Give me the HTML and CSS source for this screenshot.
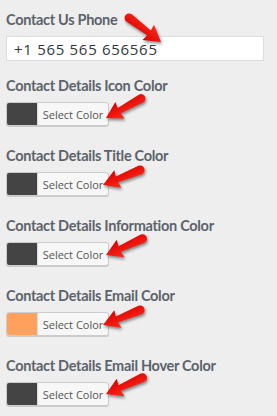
FILE: index.html
```html
<!DOCTYPE html>
<html>
<head>
    <title>Contact Settings</title>
    <link rel="stylesheet" href="styles.css">
</head>
<body>
    <div class="settings">
        <div class="field field-phone">
            <label class="field-label">Contact Us Phone</label>
            <input class="text-input" type="text" value="+1 565 565 656565">
        </div>
        <div class="field">
            <label class="field-label">Contact Details Icon Color</label>
            <button class="color-btn"><span class="swatch dark"></span><span class="btn-text">Select Color</span></button>
        </div>
        <div class="field">
            <label class="field-label">Contact Details Title Color</label>
            <button class="color-btn"><span class="swatch dark"></span><span class="btn-text">Select Color</span></button>
        </div>
        <div class="field">
            <label class="field-label">Contact Details Information Color</label>
            <button class="color-btn"><span class="swatch dark"></span><span class="btn-text">Select Color</span></button>
        </div>
        <div class="field">
            <label class="field-label">Contact Details Email Color</label>
            <button class="color-btn"><span class="swatch orange"></span><span class="btn-text">Select Color</span></button>
        </div>
        <div class="field">
            <label class="field-label">Contact Details Email Hover Color</label>
            <button class="color-btn"><span class="swatch dark"></span><span class="btn-text">Select Color</span></button>
        </div>
    </div>

    <!-- annotation arrows drawn over the form -->
    <svg class="arrows" width="277" height="416" viewBox="0 0 277 416">
        <defs>
            <linearGradient id="red" x1="0" y1="0" x2="0" y2="1">
                <stop offset="0" stop-color="#ff2a1a"/>
                <stop offset="1" stop-color="#d80000"/>
            </linearGradient>
            <path id="arrow" d="M -40 -4.5 L -15 -3 L -16 -9.5 L 0 0 L -16 9.5 L -15 3 L -40 4.5 A 4.5 4.5 0 0 1 -40 -4.5 Z" fill="url(#red)"/>
        </defs>
        <use href="#arrow" transform="translate(161 42) rotate(37)"/>
        <use href="#arrow" transform="translate(106 118) rotate(151)"/>
        <use href="#arrow" transform="translate(103 185) rotate(158)"/>
        <use href="#arrow" transform="translate(106 255) rotate(156)"/>
        <use href="#arrow" transform="translate(103 325) rotate(158)"/>
        <use href="#arrow" transform="translate(106 394) rotate(156)"/>
    </svg>
</body>
</html>
```

FILE: styles.css
```css
body {
    margin: 0;
    padding: 0;
    background: #eeeeee;
    font-family: 'Open Sans', 'Noto Sans', sans-serif;
    overflow: hidden;
}

.settings {
    padding: 10px 13px 0 6px;
    display: flex;
    flex-direction: column;
}

.field {
    display: flex;
    flex-direction: column;
    align-items: flex-start;
    margin-bottom: 20px;
}

.field-phone {
    margin-bottom: 15px;
}

.field-label {
    font-family: 'Lato', sans-serif;
    font-size: 14.5px;
    font-weight: 700;
    letter-spacing: -0.3px;
    line-height: 20px;
    color: #5c636b;
    margin-bottom: 6px;
}

.text-input {
    box-sizing: border-box;
    width: 258px;
    height: 25px;
    margin: 0;
    padding: 0 7px;
    border: 1px solid #dddddd;
    background: #fff;
    font-family: 'Open Sans', sans-serif;
    font-size: 15px;
    letter-spacing: 0.7px;
    color: #32373c;
    outline: none;
}

.color-btn {
    box-sizing: border-box;
    display: flex;
    align-items: stretch;
    width: 103px;
    height: 24px;
    margin: 0;
    padding: 0;
    border: 1px solid #cccccc;
    border-radius: 3px;
    background: #f7f7f7;
    box-shadow: 0 1px 0 #cccccc;
    overflow: hidden;
    font-family: inherit;
    cursor: pointer;
}

.swatch {
    width: 30px;
    flex-shrink: 0;
}

.swatch.dark { background: #444444; }
.swatch.orange { background: #ffa05c; }

.btn-text {
    flex: 1;
    display: flex;
    align-items: center;
    justify-content: center;
    font-family: 'Open Sans', sans-serif;
    font-size: 11px;
    color: #555555;
    border-left: 1px solid #dddddd;
}

.arrows {
    position: absolute;
    top: 0;
    left: 0;
    pointer-events: none;
    filter: drop-shadow(1px 2px 1.5px rgba(0, 0, 0, 0.45));
}
```
